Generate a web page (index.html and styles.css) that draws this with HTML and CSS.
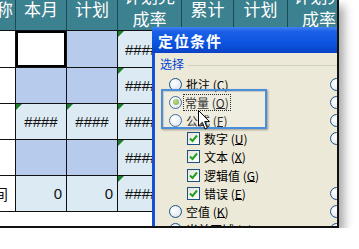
FILE: index.html
```html
<!DOCTYPE html>
<html lang="zh-CN">
<head>
  <meta charset="UTF-8" />
  <meta name="viewport" content="width=device-width, initial-scale=1.0" />
  <title>定位条件</title>
  <link rel="stylesheet" href="styles.css">
</head>
<body>

  <div class="shot">

    <!-- Worksheet behind the dialog -->
    <div class="sheet">
      <div class="cell head first">名称</div>
      <div class="cell head">本月</div>
      <div class="cell head">计划</div>
      <div class="cell head two">计划完<br>成率</div>
      <div class="cell head">累计</div>
      <div class="cell head">计划</div>
      <div class="cell head two">计划完<br>成率</div>

      <!-- Row 1 -->
      <div class="cell"></div>
      <div class="cell active"></div>
      <div class="cell sel"></div>
      <div class="cell err wide">#####</div>
      <div class="cell err">####</div>
      <div class="cell err">####</div>
      <div class="cell err">####</div>

      <!-- Row 2 -->
      <div class="cell"></div>
      <div class="cell sel"></div>
      <div class="cell sel"></div>
      <div class="cell err wide">#####</div>
      <div class="cell err">####</div>
      <div class="cell err">####</div>
      <div class="cell err">####</div>

      <!-- Row 3 -->
      <div class="cell"></div>
      <div class="cell err">####</div>
      <div class="cell err">####</div>
      <div class="cell err wide">#####</div>
      <div class="cell err">####</div>
      <div class="cell err">####</div>
      <div class="cell err">####</div>

      <!-- Row 4 -->
      <div class="cell"></div>
      <div class="cell sel"></div>
      <div class="cell sel"></div>
      <div class="cell err wide">#####</div>
      <div class="cell err">####</div>
      <div class="cell err">####</div>
      <div class="cell err">####</div>

      <!-- Row 5 -->
      <div class="cell label">完成时间</div>
      <div class="cell num">0</div>
      <div class="cell num">0</div>
      <div class="cell err wide">#####</div>
      <div class="cell num">0</div>
      <div class="cell num">0</div>
      <div class="cell err">####</div>

      <div class="blank"></div>
    </div>

    <!-- Go To Special dialog -->
    <div class="dialog">
      <div class="title">定位条件</div>
      <div class="dialog-body">
        <div class="group-label"><span>选择</span></div>
        <div class="cols">
          <div class="col left">
            <div class="opt"><span class="radio"></span><span class="text">批注 (<u>C</u>)</span></div>
            <div class="opt"><span class="radio on"></span><span class="text focus">常量 (<u>O</u>)</span></div>
            <div class="opt"><span class="radio"></span><span class="text">公式 (<u>F</u>)</span></div>
            <div class="opt sub"><span class="check"><svg width="9" height="9" viewBox="0 0 9 9"><path d="M1 4.5 L3.5 7 L8 1.5" fill="none" stroke="#21a121" stroke-width="2"/></svg></span><span class="text">数字 (<u>U</u>)</span></div>
            <div class="opt sub"><span class="check"><svg width="9" height="9" viewBox="0 0 9 9"><path d="M1 4.5 L3.5 7 L8 1.5" fill="none" stroke="#21a121" stroke-width="2"/></svg></span><span class="text">文本 (<u>X</u>)</span></div>
            <div class="opt sub"><span class="check"><svg width="9" height="9" viewBox="0 0 9 9"><path d="M1 4.5 L3.5 7 L8 1.5" fill="none" stroke="#21a121" stroke-width="2"/></svg></span><span class="text">逻辑值 (<u>G</u>)</span></div>
            <div class="opt sub"><span class="check"><svg width="9" height="9" viewBox="0 0 9 9"><path d="M1 4.5 L3.5 7 L8 1.5" fill="none" stroke="#21a121" stroke-width="2"/></svg></span><span class="text">错误 (<u>E</u>)</span></div>
            <div class="opt"><span class="radio"></span><span class="text">空值 (<u>K</u>)</span></div>
            <div class="opt"><span class="radio"></span><span class="text">当前区域 (<u>R</u>)</span></div>
          </div>
          <div class="col right">
            <div class="opt"><span class="radio"></span><span class="text">行内容差异单元格 (<u>W</u>)</span></div>
            <div class="opt"><span class="radio"></span><span class="text">列内容差异单元格 (<u>M</u>)</span></div>
            <div class="opt"><span class="radio"></span><span class="text">引用单元格 (<u>P</u>)</span></div>
            <div class="opt"><span class="radio"></span><span class="text">从属单元格 (<u>D</u>)</span></div>
            <div class="opt sub"><span class="radio"></span><span class="text">直属 (<u>I</u>)</span></div>
            <div class="opt sub"><span class="radio"></span><span class="text">所有级别 (<u>L</u>)</span></div>
            <div class="opt"><span class="radio"></span><span class="text">最后一个单元格 (<u>S</u>)</span></div>
            <div class="opt"><span class="radio"></span><span class="text">可见单元格 (<u>Y</u>)</span></div>
            <div class="opt"><span class="radio"></span><span class="text">条件格式 (<u>T</u>)</span></div>
          </div>
        </div>
      </div>
    </div>

    <!-- Tutorial highlight and mouse pointer -->
    <div class="mark"></div>
    <svg class="cursor" width="13" height="21" viewBox="0 0 13 21">
      <path d="M0.5 0.5 L0.5 16 L4.3 12.4 L7 19 L9.3 18 L6.7 11.6 L11.5 11.6 Z" fill="#fff" stroke="#000" stroke-width="1"/>
    </svg>

  </div>

</body>
</html>
```

FILE: styles.css
```css
html, body {
  margin: 0;
  padding: 0;
  background: #fff;
}

body {
  font-family: "Noto Sans CJK SC", sans-serif;
}

/* the captured screen, with its frame and drop shadow */
.shot {
  position: relative;
  width: 339px;
  height: 228px;
  box-sizing: border-box;
  overflow: hidden;
  background: #fff;
  border-right: 2px solid #111;
  border-bottom: 2px solid #111;
  box-shadow: 5px 6px 9px rgba(0, 0, 0, 0.35);
}

/* worksheet */
.sheet {
  display: grid;
  grid-template-columns: 51px 51px 51px 64px 52px 54px 63px;
  grid-template-rows: 39px 37px 36px 36px 36px 36px 36px;
  margin: -8px 0 0 -35px;
  width: 386px;
}

.cell {
  position: relative;
  box-sizing: border-box;
  border-right: 1px solid #111;
  border-bottom: 1px solid #111;
  background: #fff;
  display: flex;
  align-items: center;
  justify-content: center;
  font-family: "Liberation Sans", "Noto Sans CJK SC", sans-serif;
  font-size: 15px;
  color: #111;
  white-space: nowrap;
  overflow: hidden;
}

.cell.head {
  background: #3c8190;
  border-right-color: #1b4a55;
  border-bottom-color: #111;
  color: #fff;
  font-family: "Noto Sans CJK SC", sans-serif;
  font-size: 17px;
  line-height: 17px;
  padding-bottom: 5px;
}

.cell.head.two {
  align-items: flex-end;
  padding-bottom: 0;
  line-height: 23px;
  text-align: center;
}

.cell.head.first {
  justify-content: flex-end;
  padding-right: 2px;
}

.cell.sel {
  background: #b7cbec;
}

.cell.active {
  box-shadow: inset 0 0 0 2px #000;
}

.cell.err,
.cell.num {
  background: #dcebf3;
}

.cell.err.wide {
  justify-content: flex-start;
  padding-left: 7px;
}

/* green error marker in the top-left corner */
.cell.err::before {
  content: "";
  position: absolute;
  top: 0;
  left: 0;
  border-top: 6px solid #1e7d2a;
  border-right: 6px solid transparent;
}

.cell.num {
  justify-content: flex-end;
  padding-right: 4px;
}

.cell.label {
  justify-content: flex-end;
  padding-right: 7px;
  font-family: "Noto Sans CJK SC", sans-serif;
}

.blank {
  grid-column: 1 / -1;
  background: #fff;
}

/* dialog window */
.dialog {
  position: absolute;
  left: 152px;
  top: 27px;
  width: 240px;
  height: 230px;
  box-sizing: border-box;
  background: #ece9d8;
  border-left: 3px solid #1650d8;
  font-size: 12px;
  color: #000;
}

.title {
  height: 26px;
  margin-left: -3px;
  padding-left: 6px;
  box-sizing: border-box;
  display: flex;
  align-items: center;
  background: linear-gradient(to bottom, #3f82f2 0%, #1a5fe6 18%, #0b53de 65%, #0a41c4 100%);
  color: #fff;
  font-size: 15px;
  font-weight: bold;
  letter-spacing: 1px;
}

.dialog-body {
  padding-top: 4px;
}

.group-label {
  display: flex;
  align-items: center;
  height: 14px;
  line-height: 14px;
  padding-left: 5px;
  color: #0046d5;
}

.group-label::after {
  content: "";
  flex: 1;
  height: 1px;
  margin: 2px 0 0 4px;
  background: #d0d0bf;
}

.cols {
  display: flex;
  padding: 4px 0 0 14px;
}

.col.left {
  width: 161px;
  flex-shrink: 0;
}

.col.right {
  white-space: nowrap;
}

.opt {
  display: flex;
  align-items: center;
  height: 18.2px;
  white-space: nowrap;
}

.opt.sub {
  padding-left: 18px;
}

.col.right .opt.sub {
  padding-left: 20px;
}

.text {
  margin-left: 3px;
  line-height: 15px;
  padding: 0 1px;
}

.text u {
  text-decoration: none;
  border-bottom: 1px solid #000;
  line-height: 11px;
  display: inline-block;
}

.text.focus {
  outline: 1px dotted #000;
  margin-left: 2px;
}

.radio {
  width: 13px;
  height: 13px;
  box-sizing: border-box;
  border-radius: 50%;
  border: 1px solid #1c5180;
  background: radial-gradient(circle at 35% 35%, #ffffff 0%, #e6ecf5 60%, #cfd9e8 100%);
  flex-shrink: 0;
  display: flex;
  align-items: center;
  justify-content: center;
}

.radio.on::after {
  content: "";
  width: 6px;
  height: 6px;
  border-radius: 50%;
  background: radial-gradient(circle at 40% 40%, #b4d66a 0%, #5f9a22 100%);
}

.check {
  width: 13px;
  height: 13px;
  box-sizing: border-box;
  border: 1px solid #1c5180;
  background: linear-gradient(135deg, #e4e4dc 0%, #ffffff 100%);
  flex-shrink: 0;
  display: flex;
  align-items: center;
  justify-content: center;
}

/* blue annotation box round the chosen option */
.mark {
  position: absolute;
  left: 161px;
  top: 89px;
  width: 106px;
  height: 40px;
  box-sizing: border-box;
  border: 2px solid #4a8fdc;
  background: rgba(255, 255, 255, 0.18);
  box-shadow: 1px 1px 2px rgba(0, 0, 0, 0.35), inset 1px 1px 1px rgba(0, 0, 0, 0.15);
}

.cursor {
  position: absolute;
  left: 198px;
  top: 110px;
}
```
